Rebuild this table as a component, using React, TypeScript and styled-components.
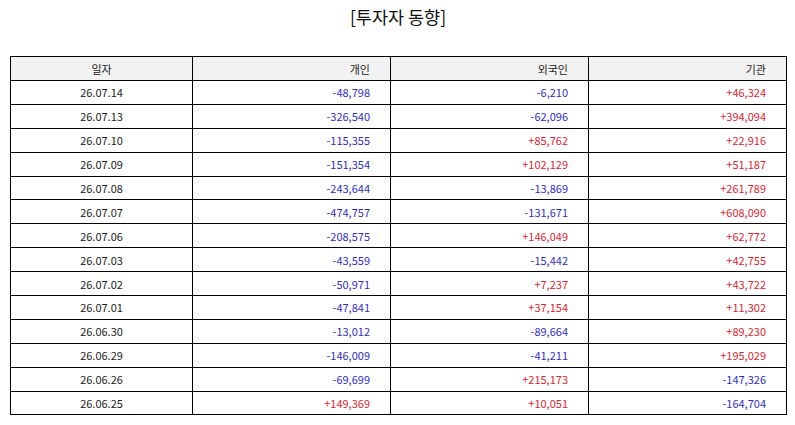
import React from "react";
import styled, { createGlobalStyle } from "styled-components";

const GlobalStyle = createGlobalStyle`
  html, body {
    margin: 0;
    padding: 0;
    background: #ffffff;
  }
  body {
    font-family: "Noto Sans CJK KR", "Noto Sans", sans-serif;
    color: #222;
  }
`;

const Page = styled.div`
  width: 795px;
  height: 425px;
  padding: 0 9px 0 10px;
  box-sizing: border-box;
  display: flex;
  flex-direction: column;
`;

const Title = styled.h1`
  margin: 0;
  padding-top: 5px;
  height: 56px;
  box-sizing: border-box;
  text-align: center;
  font-size: 17.5px;
  line-height: 24px;
  font-weight: 400;
  color: #111;
`;

const Table = styled.table`
  width: 776px;
  border-collapse: collapse;
  table-layout: fixed;
  font-size: 11px;
`;

const HeadCell = styled.th<{ $align?: "center" | "right" }>`
  height: 23px;
  padding: 0;
  border: 1px solid #000;
  background: #f2f2f2;
  font-weight: 400;
  color: #222;
  text-align: ${(p) => p.$align || "right"};
  padding-right: ${(p) => (p.$align === "center" ? "0" : "20px")};
`;

const Cell = styled.td<{ $tone?: "up" | "down" }>`
  height: 22.9px;
  padding: 0 20px 0 0;
  border: 1px solid #000;
  text-align: right;
  color: ${(p) => (p.$tone === "up" ? "#e2232e" : p.$tone === "down" ? "#2d2dcc" : "#222")};
`;

const DateCell = styled.td`
  height: 22.9px;
  padding: 0;
  border: 1px solid #000;
  text-align: center;
  color: #222;
`;

type Row = [string, string, string, string];

const rows: Row[] = [
  ["26.07.14", "-48,798", "-6,210", "+46,324"],
  ["26.07.13", "-326,540", "-62,096", "+394,094"],
  ["26.07.10", "-115,355", "+85,762", "+22,916"],
  ["26.07.09", "-151,354", "+102,129", "+51,187"],
  ["26.07.08", "-243,644", "-13,869", "+261,789"],
  ["26.07.07", "-474,757", "-131,671", "+608,090"],
  ["26.07.06", "-208,575", "+146,049", "+62,772"],
  ["26.07.03", "-43,559", "-15,442", "+42,755"],
  ["26.07.02", "-50,971", "+7,237", "+43,722"],
  ["26.07.01", "-47,841", "+37,154", "+11,302"],
  ["26.06.30", "-13,012", "-89,664", "+89,230"],
  ["26.06.29", "-146,009", "-41,211", "+195,029"],
  ["26.06.26", "-69,699", "+215,173", "-147,326"],
  ["26.06.25", "+149,369", "+10,051", "-164,704"],
];

const tone = (v: string) => (v.startsWith("+") ? "up" : "down");

const App = () => {
  return (
    <>
      <GlobalStyle />
      <Page>
        <Title>[투자자 동향]</Title>
        <Table>
          <colgroup>
            <col style={{ width: 182 }} />
            <col style={{ width: 198 }} />
            <col style={{ width: 198 }} />
            <col style={{ width: 198 }} />
          </colgroup>
          <thead>
            <tr>
              <HeadCell $align="center">일자</HeadCell>
              <HeadCell>개인</HeadCell>
              <HeadCell>외국인</HeadCell>
              <HeadCell>기관</HeadCell>
            </tr>
          </thead>
          <tbody>
            {rows.map(([date, personal, foreign, inst]) => (
              <tr key={date}>
                <DateCell>{date}</DateCell>
                <Cell $tone={tone(personal)}>{personal}</Cell>
                <Cell $tone={tone(foreign)}>{foreign}</Cell>
                <Cell $tone={tone(inst)}>{inst}</Cell>
              </tr>
            ))}
          </tbody>
        </Table>
      </Page>
    </>
  );
};

export default App;
